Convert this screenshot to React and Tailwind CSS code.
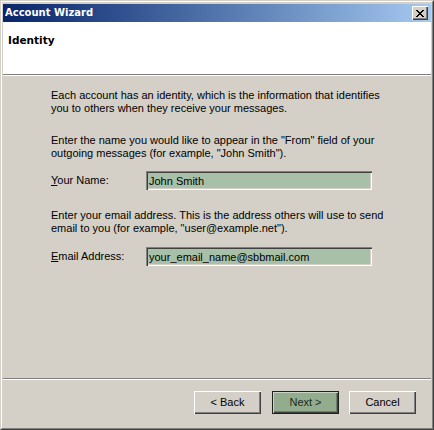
import React from "react";

const raised =
  "shadow-[inset_1px_1px_0_#ffffff,inset_-1px_-1px_0_#404040,inset_-2px_-2px_0_#808080]";
const sunken =
  "shadow-[inset_1px_1px_0_#808080,inset_2px_2px_0_#404040,inset_-1px_-1px_0_#ffffff,inset_-2px_-2px_0_#d4d0c8]";

const Field = ({ label, mnemonic, rest, value }) => (
  <div className="flex items-center h-[19px]">
    <div className="w-[95px] whitespace-nowrap">
      <span className="underline underline-offset-[1px]">{mnemonic}</span>
      {rest}
    </div>
    <div className={`w-[226px] h-[19px] bg-[#a8c0a8] ${sunken} flex items-center pl-[3px] pt-px whitespace-nowrap`}>
      {value}
    </div>
  </div>
);

const Button = ({ children, primary }) =>
  primary ? (
    <div className="w-[67px] h-[23px] border border-[#202020] bg-[#93ac8e] shadow-[inset_1px_1px_0_#c8d4c4,inset_-1px_-1px_0_#404040,inset_-2px_-2px_0_#6c7f68] flex items-center justify-center text-[#1c2a1c]">
      {children}
    </div>
  ) : (
    <div className={`w-[67px] h-[23px] bg-[#d4d0c8] ${raised} flex items-center justify-center`}>
      {children}
    </div>
  );

export default function App() {
  return (
    <div className="w-[434px] h-[430px] bg-[#d4d0c8] border border-t-[#d4d0c8] border-l-[#d4d0c8] border-r-[#404040] border-b-[#404040] font-['Liberation_Sans',Arial,sans-serif] text-[11px] leading-[13px] text-black">
      <div className="h-full border border-t-white border-l-white border-r-[#808080] border-b-[#808080] pt-[2px] px-px pb-px flex flex-col">
        {/* title bar */}
        <div className="h-[18px] bg-gradient-to-r from-[#0a246a] to-[#a6caf0] flex items-center justify-between pl-[2px] pr-[3px]">
          <span className="font-['DejaVu_Sans',sans-serif] font-bold text-[10px] text-white leading-none">
            Account Wizard
          </span>
          <div className={`w-[16px] h-[14px] bg-[#d4d0c8] ${raised} flex items-center justify-center`}>
            <svg width="8" height="7" viewBox="0 0 8 7" shapeRendering="crispEdges">
              <path d="M0 0h2v1h-2zM6 0h2v1h-2zM1 1h2v1h-2zM5 1h2v1h-2zM2 2h4v1h-4zM3 3h2v1h-2zM2 4h4v1h-4zM1 5h2v1h-2zM5 5h2v1h-2zM0 6h2v1h-2zM6 6h2v1h-2z" fill="#000" />
            </svg>
          </div>
        </div>

        {/* header */}
        <div className="h-[52px] bg-white pl-[5px] pt-[12px]">
          <div className="font-['DejaVu_Sans',sans-serif] font-bold text-[10.5px]">Identity</div>
        </div>
        <div className="h-px bg-[#808080]" />
        <div className="h-px bg-white" />

        {/* body */}
        <div className="flex-1 pl-[48px] pt-[13px]">
          <div className="whitespace-nowrap">
            Each account has an identity, which is the information that identifies
            <br />
            you to others when they receive your messages.
          </div>
          <div className="whitespace-nowrap mt-[19px]">
            Enter the name you would like to appear in the "From" field of your
            <br />
            outgoing messages (for example, "John Smith").
          </div>
          <div className="mt-[11px]">
            <Field mnemonic="Y" rest="our Name:" value="John Smith" />
          </div>
          <div className="whitespace-nowrap mt-[19px]">
            Enter your email address. This is the address others will use to send
            <br />
            email to you (for example, "user@example.net").
          </div>
          <div className="mt-[12px]">
            <Field mnemonic="E" rest="mail Address:" value="your_email_name@sbbmail.com" />
          </div>
        </div>

        <div className="h-px bg-[#808080]" />
        <div className="h-px bg-white" />

        {/* buttons */}
        <div className="h-[47px] pt-[11px] pr-[15px] flex justify-end items-start">
          <Button>&lt; Back</Button>
          <div className="w-[11px]" />
          <Button primary>Next &gt;</Button>
          <div className="w-[10px]" />
          <Button>Cancel</Button>
        </div>
      </div>
    </div>
  );
}
